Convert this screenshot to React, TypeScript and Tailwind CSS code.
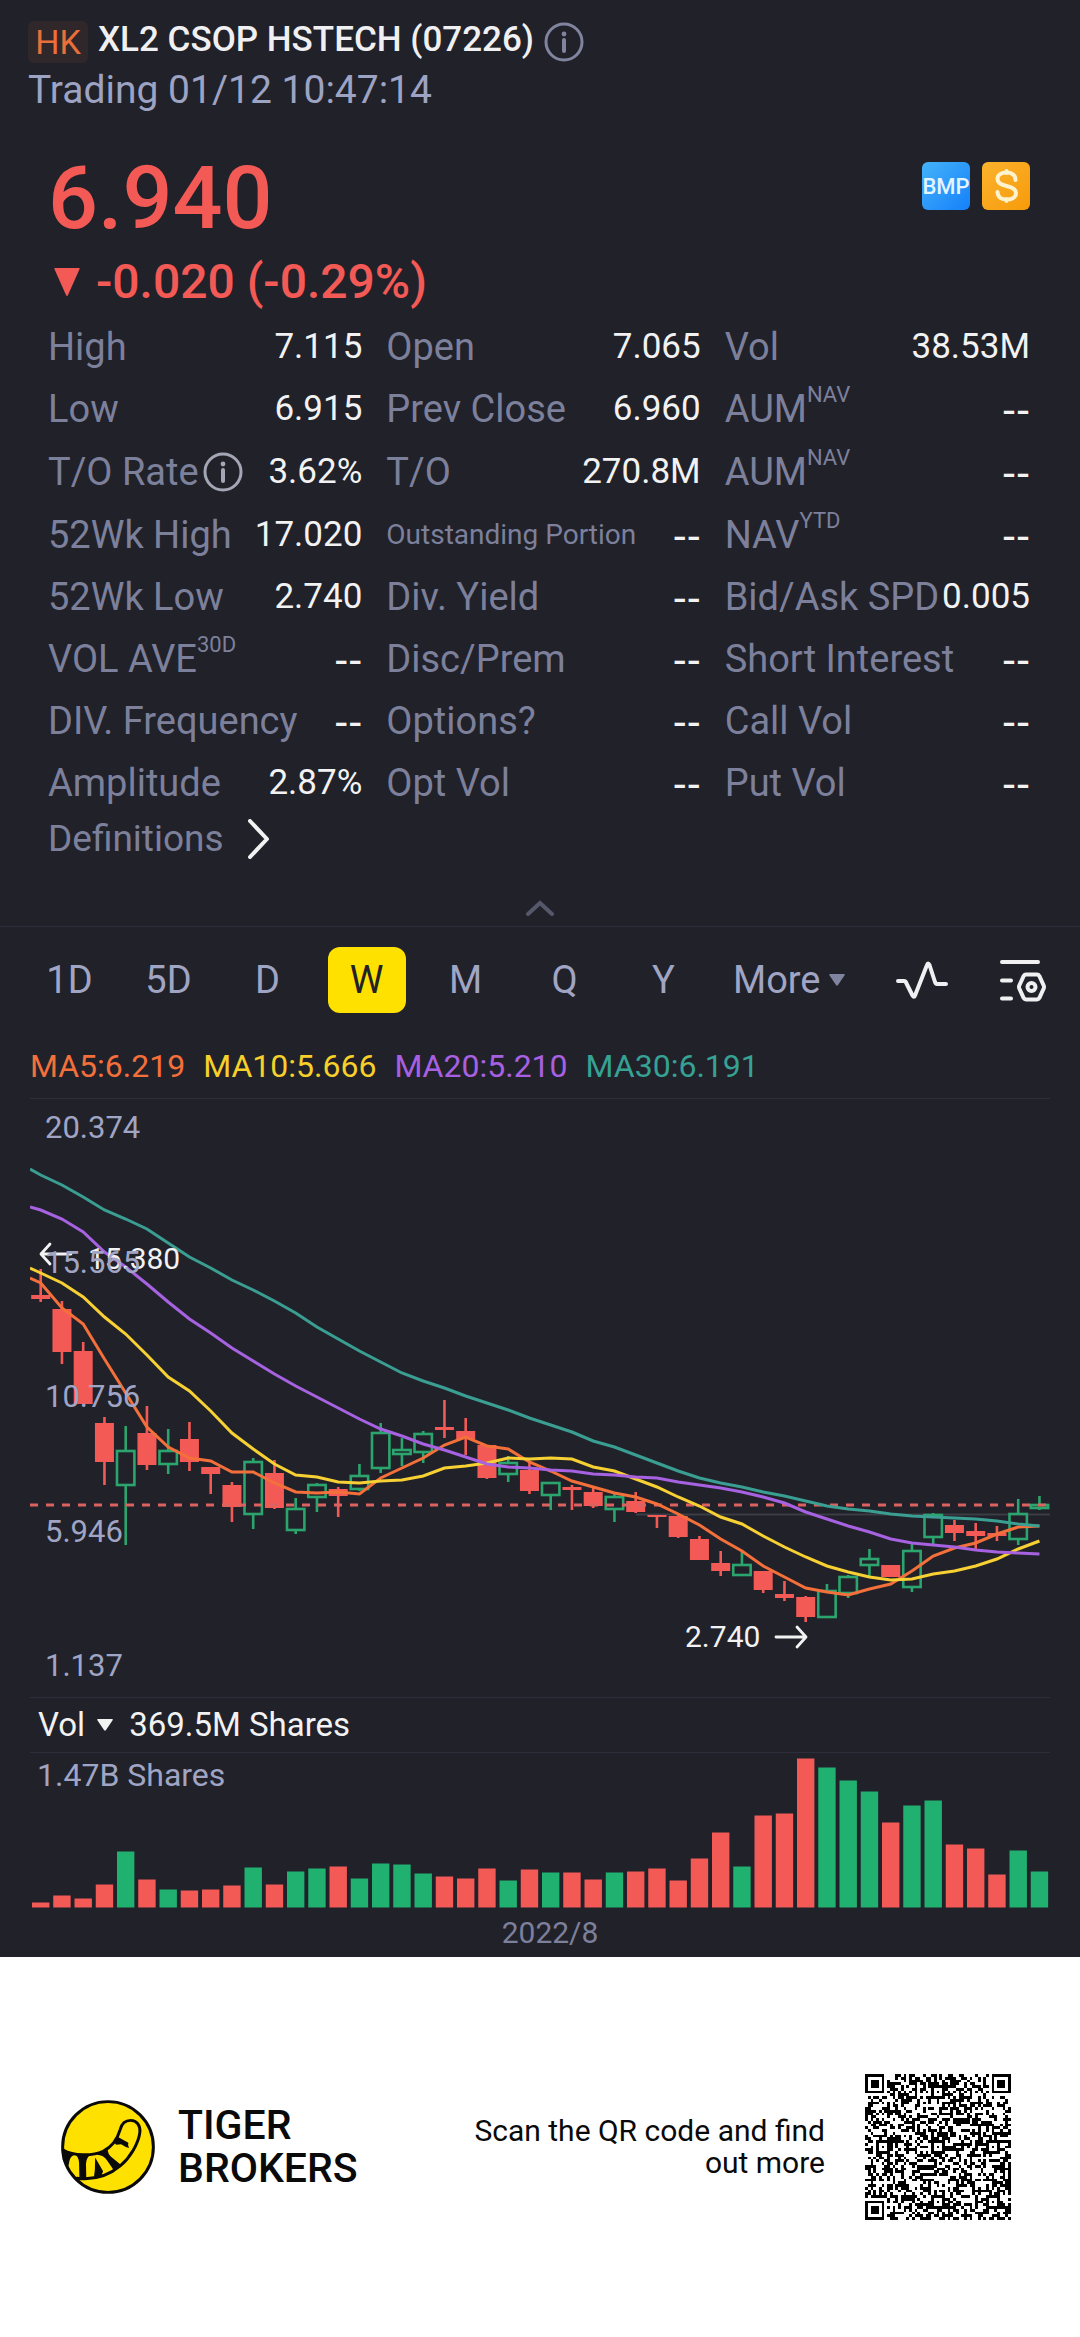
import React from 'react';

type Candle = [up: 0 | 1, high: number, top: number, bottom: number, low: number, volume: number];

const CANDLES: Candle[] = [
  [0, 170, 196, 200, 203, 5], [0, 202, 210, 253, 265, 12], [0, 243, 252, 305, 305, 9], [0, 318, 324, 363, 386, 23],
  [1, 327, 351, 387, 446, 56], [0, 307, 334, 366, 371, 28], [1, 330, 351, 366, 375, 18], [0, 323, 340, 363, 372, 17],
  [0, 368, 368, 375, 395, 18], [0, 383, 386, 408, 423, 22], [1, 359, 362, 416, 430, 40], [0, 361, 374, 409, 410, 23],
  [1, 399, 409, 432, 435, 36], [1, 384, 385, 399, 413, 39], [0, 388, 390, 397, 418, 41], [1, 365, 376, 391, 392, 29],
  [1, 324, 333, 370, 374, 44], [1, 339, 350, 356, 367, 43], [1, 332, 334, 354, 364, 34], [0, 301, 328, 331, 339, 31],
  [0, 319, 332, 340, 356, 29], [0, 346, 346, 379, 380, 39], [1, 357, 363, 376, 383, 27], [0, 363, 371, 392, 395, 38],
  [1, 383, 383, 397, 411, 35], [0, 386, 388, 391, 411, 35], [0, 389, 393, 407, 409, 28], [1, 394, 397, 411, 423, 35],
  [0, 393, 402, 413, 414, 36], [0, 416, 416, 418, 429, 39], [0, 414, 417, 438, 439, 27], [0, 437, 440, 461, 461, 49],
  [0, 452, 464, 472, 477, 75], [1, 453, 465, 477, 477, 41], [0, 472, 472, 491, 494, 92], [0, 482, 495, 499, 502, 94],
  [0, 497, 498, 518, 523, 149], [1, 485, 491, 519, 519, 140], [1, 476, 477, 495, 499, 127], [1, 450, 459, 467, 477, 116],
  [0, 466, 466, 478, 478, 85], [1, 445, 451, 489, 493, 102], [1, 414, 415, 439, 445, 107], [0, 421, 426, 434, 442, 63],
  [0, 424, 432, 437, 450, 59], [0, 427, 434, 437, 442, 33], [1, 400, 414, 441, 446, 57], [1, 397, 405, 410, 411, 36],
];

// The first value is the left edge of the plot, the rest are one per candle
const AVERAGES = [
  {
    label: 'MA5:6.219', color: '#f4703a', text: 'text-[#f4703a]',
    values: [179, 184, 209, 225, 260, 294, 328, 348, 359, 362, 373, 373, 384, 393, 394, 393, 395, 379, 369, 359, 346, 338, 347, 350, 363, 372, 382, 388, 394, 398, 405, 415, 426, 440, 452, 467, 478, 489, 493, 496, 490, 485, 472, 457, 449, 444, 435, 428, 427],
  },
  {
    label: 'MA10:5.666', color: '#f7d034', text: 'text-[#f7d02a]',
    values: [169, 174, 184, 198, 218, 235, 256, 278, 292, 312, 334, 350, 365, 376, 378, 383, 384, 382, 381, 377, 369, 367, 364, 359, 360, 359, 360, 368, 372, 380, 388, 398, 407, 418, 425, 437, 448, 458, 467, 473, 478, 481, 480, 475, 472, 467, 460, 450, 442],
  },
  {
    label: 'MA20:5.210', color: '#a662e0', text: 'text-[#a860e2]',
    values: [108, 111, 120, 133, 153, 168, 185, 203, 220, 234, 249, 262, 275, 287, 298, 309, 320, 330, 337, 345, 351, 358, 365, 368, 369, 371, 372, 375, 376, 378, 379, 383, 386, 389, 393, 398, 404, 413, 420, 427, 433, 440, 444, 446, 448, 451, 453, 454, 455],
  },
  {
    label: 'MA30:6.191', color: '#3a9e92', text: 'text-[#35a294]',
    values: [70, 76, 86, 98, 111, 120, 130, 144, 158, 169, 181, 191, 202, 214, 228, 240, 252, 263, 274, 282, 289, 297, 304, 311, 319, 326, 333, 342, 348, 356, 364, 372, 379, 384, 388, 393, 397, 402, 407, 410, 412, 415, 417, 418, 419, 420, 422, 425, 427],
  },
];

const AXIS = [
  { label: '20.374', y: 39 },
  { label: '15.565', y: 174 },
  { label: '10.756', y: 308 },
  { label: '5.946', y: 443 },
  { label: '1.137', y: 577 },
];

type Stat = { label: string; value: string; sup?: string; info?: boolean; small?: boolean };

const STATS: Stat[] = [
  { label: 'High', value: '7.115' }, { label: 'Open', value: '7.065' }, { label: 'Vol', value: '38.53M' },
  { label: 'Low', value: '6.915' }, { label: 'Prev Close', value: '6.960' }, { label: 'AUM', sup: 'NAV', value: '--' },
  { label: 'T/O Rate', value: '3.62%', info: true }, { label: 'T/O', value: '270.8M' }, { label: 'AUM', sup: 'NAV', value: '--' },
  { label: '52Wk High', value: '17.020' }, { label: 'Outstanding Portion', value: '--', small: true }, { label: 'NAV', sup: 'YTD', value: '--' },
  { label: '52Wk Low', value: '2.740' }, { label: 'Div. Yield', value: '--' }, { label: 'Bid/Ask SPD', value: '0.005' },
  { label: 'VOL AVE', sup: '30D', value: '--' }, { label: 'Disc/Prem', value: '--' }, { label: 'Short Interest', value: '--' },
  { label: 'DIV. Frequency', value: '--' }, { label: 'Options?', value: '--' }, { label: 'Call Vol', value: '--' },
  { label: 'Amplitude', value: '2.87%' }, { label: 'Opt Vol', value: '--' }, { label: 'Put Vol', value: '--' },
];

const PERIODS = ['1D', '5D', 'D', 'W', 'M', 'Q', 'Y'];

const candleX = (i: number) => 10.7 + i * 21.25;

const InfoIcon: React.FC<{ className: string }> = ({ className }) => (
  <svg viewBox="0 0 40 40" fill="none" stroke="currentColor" className={className} aria-hidden="true">
    <circle cx="20" cy="20" r="18" strokeWidth="3" />
    <circle cx="20" cy="12" r="2.4" fill="currentColor" stroke="none" />
    <path d="M20 18v11" strokeWidth="4" strokeLinecap="round" />
  </svg>
);

const Header: React.FC = () => (
  <header className="px-7 pt-5">
    <div className="flex h-11 items-center">
      <span className="flex h-[42px] w-[60px] items-center justify-center rounded-md bg-[#30272b] text-[34px] text-[#ea6f38]">HK</span>
      <h1 className="mb-1 ml-2.5 text-[35px] leading-9 font-medium text-[#f0f0f2]">XL2 CSOP HSTECH (07226)</h1>
      <button aria-label="About this security" className="ml-2.5">
        <InfoIcon className="size-10 text-[#80849f]" />
      </button>
    </div>
    <p className="text-[39px] leading-[52px] text-[#9da3c2]">Trading 01/12 10:47:14</p>
  </header>
);

const Price: React.FC = () => (
  <section className="flex items-start justify-between pt-10 pr-[50px] pl-12 text-[#f35a56]">
    <div>
      <p className="text-[88px] leading-[84px] font-medium">6.940</p>
      <p className="mt-2 flex h-[68px] items-center gap-4 pl-1.5 text-[48px] font-medium">
        <svg viewBox="0 0 26 28" className="h-7 w-6.5" fill="currentColor" aria-hidden="true">
          <path d="M1 0h24q1 0 .6 1L14 27q-1 2-2 0L.4 1Q0 0 1 0z" />
        </svg>
        -0.020 (-0.29%)
      </p>
    </div>
    <div className="mt-1.5 flex gap-3">
      <span className="flex size-12 items-center justify-center rounded-md bg-linear-to-br from-[#45b2fa] to-[#1380fa] text-[22px] font-medium text-[#e4f5ff]">BMP</span>
      <span className="flex size-12 items-center justify-center rounded-md bg-linear-to-br from-[#fbb22b] to-[#f79b04]">
        <svg viewBox="0 0 48 48" className="size-12" fill="none" stroke="#fff3cf" strokeWidth="4" strokeLinecap="round" aria-label="Dollar">
          <path d="M33.500 18c0-5-4-7.500-9-7.500s-9 2.500-9 6.500c0 4.500 4.500 6 9 7s9.500 2.500 9.500 7-4.500 6.500-9.500 6.500-9-2.500-9-7.500M24.500 9v2M24.500 37v2" />
        </svg>
      </span>
    </div>
  </section>
);

const Stats: React.FC = () => (
  <section className="pr-[50px] pl-12">
    <dl className="grid grid-cols-[314fr_314fr_305fr] gap-x-6">
      {STATS.map((s, i) => (
        <div key={i} className={`flex items-center justify-between whitespace-nowrap ${i > 5 && i < 9 ? 'h-16' : 'h-[62px]'}`}>
          <dt className={`flex items-center text-[#7c809b] ${s.small ? 'text-[28px]' : 'text-[38px]'}`}>
            <span>
              {s.label}
              {s.sup && <sup className="-top-5 text-[22px]">{s.sup}</sup>}
            </span>
            {s.info && <InfoIcon className="ml-1 size-10 text-[#a3a6b3]" />}
          </dt>
          <dd className={`text-[#f2f2f3] ${s.value === '--' ? 'font-["Liberation_Sans",sans-serif] text-[42px]' : 'text-[35px]'}`}>{s.value}</dd>
        </div>
      ))}
    </dl>
    <a href="#definitions" className="flex h-[50px] items-center gap-6 text-[37px] text-[#7c809b]">
      Definitions
      <svg viewBox="0 0 22 40" className="h-10 w-5.5 text-[#f2f2f3]" fill="none" stroke="currentColor" strokeWidth="4" strokeLinecap="round" strokeLinejoin="round" aria-hidden="true">
        <path d="M2 2l17 18L2 38" />
      </svg>
    </a>
  </section>
);

const Toolbar: React.FC = () => (
  <nav className="grid grid-cols-[repeat(7,99fr)_333fr] items-center border-t border-[#2d2e3b] pt-5 pr-[34px] pl-5 text-[38px] text-[#a0a5c4]">
    {PERIODS.map((p) => (
      <button key={p} className="flex justify-center">
        <span className={`flex h-[66px] w-[78px] items-center justify-center rounded-xl ${p === 'W' ? 'bg-[#ffe100] text-[#22222a]' : ''}`}>{p}</span>
      </button>
    ))}
    <div className="flex items-center justify-between pl-5">
      <button className="flex items-center gap-2">
        More
        <svg viewBox="0 0 16 12" className="h-3 w-4 text-[#80849f]" fill="currentColor" aria-hidden="true">
          <path d="M1 0h14q1.500 0 .6 1.200L9 11q-1 1.400-2 0L.4 1.200Q-.5 0 1 0z" />
        </svg>
      </button>
      <button aria-label="Indicators">
        <svg viewBox="0 0 52 38" className="h-[38px] w-13 text-[#f0f0f2]" fill="none" stroke="currentColor" strokeWidth="4" strokeLinecap="round" strokeLinejoin="round">
          <path d="M2 20h6q1.500 0 2 1.500l6.500 13q1.500 2.500 2.500 0L31 4q1-3 2.500 0L39 21q.8 2 2 2h9" />
        </svg>
      </button>
      <button aria-label="Chart settings">
        <svg viewBox="0 0 46 44" className="h-11 w-[46px] text-[#f0f0f2]" fill="none" stroke="currentColor" strokeWidth="4" strokeLinecap="round" strokeLinejoin="round">
          <path d="M2 4h36M2 22.500h9M2 40.500h9" />
          <path d="M26 16.500h11q1.500 0 2.300 1.400l4.400 9.600q.6 1.500 0 3l-4.400 9.600q-.8 1.400-2.300 1.400H26q-1.500 0-2.300-1.400l-4.400-9.600q-.6-1.500 0-3l4.400-9.600q.8-1.400 2.300-1.400z" />
          <circle cx="31.500" cy="29" r="4" />
        </svg>
      </button>
    </div>
  </nav>
);

const PriceChart: React.FC = () => (
  <svg viewBox="0 0 1020 598" className="block h-auto w-full" role="img" aria-label="Weekly price chart">
    <path d="M606 415.500h414" stroke="#3c3d45" strokeWidth="2" />
    {CANDLES.map(([up, high, top, bottom, low], i) => {
      const x = candleX(i);
      const color = up ? '#2ba56d' : '#f35a56';
      return (
        <g key={i} stroke={color} strokeWidth="2.600">
          <path d={`M${x} ${high}V${top}M${x} ${bottom}V${low}`} />
          {up ? (
            <rect x={x - 8.7} y={top + 1} width="17.400" height={bottom - top - 2} fill="none" />
          ) : (
            <rect x={x - 9.5} y={top} width="19" height={bottom - top} fill={color} stroke="none" />
          )}
        </g>
      );
    })}
    <path d="M0 406h1017" stroke="#dc6260" strokeWidth="3" strokeDasharray="8 8" />
    {AVERAGES.map((ma) => (
      <polyline
        key={ma.label}
        points={ma.values.map((y, i) => `${i === 0 ? 0 : candleX(i - 1)},${y}`).join(' ')}
        fill="none"
        stroke={ma.color}
        strokeWidth="3"
      />
    ))}
    <g fontSize="30" fill="#f2f2f3">
      <text x="58" y="170">15.380</text>
      <text x="655" y="548">2.740</text>
    </g>
    <g fill="none" stroke="#f2f2f3" strokeWidth="2.800" strokeLinecap="round" strokeLinejoin="round">
      <path d="M41 155H11M20 145L11 155l9 10" />
      <path d="M746 538h30M767 528l9 10-9 10" />
    </g>
    <g fontSize="31" fill="#a0a5c4">
      {AXIS.map((a) => (
        <text key={a.label} x="15" y={a.y}>{a.label}</text>
      ))}
    </g>
  </svg>
);

const VolumeChart: React.FC = () => (
  <svg viewBox="0 0 1020 155" className="block h-auto w-full" role="img" aria-label="Weekly volume">
    {CANDLES.map((c, i) => (
      <rect key={i} x={candleX(i) - 8.7} y={154.5 - c[5]} width="17.400" height={c[5]} fill={c[0] ? '#20b070' : '#f35a56'} />
    ))}
    <text x="7" y="33" fontSize="32" fill="#a0a5c4">1.47B Shares</text>
  </svg>
);

const Chart: React.FC = () => (
  <section className="mx-[30px]">
    <ul className="mt-[33px] flex gap-[18px] border-b border-[#2d2e3b] pb-3 text-[32px] leading-10">
      {AVERAGES.map((ma) => (
        <li key={ma.label} className={ma.text}>{ma.label}</li>
      ))}
    </ul>
    <PriceChart />
    <div className="flex h-14 items-center gap-4 border-y border-[#2d2e3b] px-2 text-[33px] text-[#f2f2f3]">
      <button className="flex items-center gap-3">
        Vol
        <svg viewBox="0 0 16 12" className="h-3 w-4" fill="currentColor" aria-hidden="true">
          <path d="M1 0h14q1.500 0 .6 1.200L9 11q-1 1.400-2 0L.4 1.200Q-.5 0 1 0z" />
        </svg>
      </button>
      369.5M Shares
    </div>
    <VolumeChart />
    <p className="pl-5 text-center text-[30px] leading-[49px] text-[#7c809b]">2022/8</p>
  </section>
);

const TigerLogo: React.FC = () => (
  <svg viewBox="58 53 292 292" className="size-24" aria-hidden="true">
    <circle cx="204" cy="199" r="138" fill="#ffe100" stroke="#0a0a0a" strokeWidth="9" />
    <path
      d="M67 208c32 18 88 20 122 4 32-16 45-42 52-66 5-20 19-28 32-28 19 0 30 16 28 36-4 34-29 76-59 102-38 32-86 44-132 38"
      fill="none"
      stroke="#0a0a0a"
      strokeWidth="9"
      strokeLinecap="round"
    />
    <g fill="#0a0a0a">
      <path d="M66 205l38 18q-14 2-17 17l-5 25-16-28z" />
      <path d="M104 222l44 3q-10 8-11 26l1 44-21-3-1-45q-1-18-12-25z" />
      <path d="M165 231l24 42-5 13-23 6 3-23z" />
      <path d="M168 223l35-20q-1 18 14 29l25 20-21 17-18-27q-14-20-35-19z" />
      <path d="M220 182l13-14 33 18q-3 7 2 16l-10-3-14-8-15 1z" />
    </g>
  </svg>
);

const QR_SIZE = 53;
const QR_ALIGN = [6, 26, 46];

const qrModule = (x: number, y: number) => {
  const last = QR_SIZE - 7;
  for (const [fx, fy] of [[0, 0], [last, 0], [0, last]]) {
    const dx = x - fx;
    const dy = y - fy;
    if (dx >= -1 && dx <= 7 && dy >= -1 && dy <= 7) {
      const ring = Math.max(Math.abs(dx - 3), Math.abs(dy - 3));
      return ring === 3 || ring < 2;
    }
  }
  for (const ax of QR_ALIGN) {
    for (const ay of QR_ALIGN) {
      const ring = Math.max(Math.abs(x - ax), Math.abs(y - ay));
      const onFinder = (ax === 6 && ay !== 26) || (ay === 6 && ax === 46);
      if (!onFinder && ring <= 2) return ring !== 1;
    }
  }
  if (x === 6 || y === 6) return (x + y) % 2 === 0;
  let h = (x * 374761393 + y * 668265263) | 0;
  h = Math.imul(h ^ (h >>> 13), 1274126177);
  return ((h ^ (h >>> 16)) & 1) === 1;
};

const QrCode: React.FC = () => {
  let d = '';
  for (let y = 0; y < QR_SIZE; y++) {
    for (let x = 0; x < QR_SIZE; x++) {
      if (qrModule(x, y)) d += `M${x} ${y}h1v1h-1z`;
    }
  }
  return (
    <svg viewBox="0 0 53 53" className="size-[146px] shrink-0" shapeRendering="crispEdges" role="img" aria-label="QR code">
      <path d={d} />
    </svg>
  );
};

const Footer: React.FC = () => (
  <footer className="flex items-center justify-between bg-white py-[117px] pr-[69px] pl-[60px] text-[#0a0a0a]">
    <div className="flex items-center gap-[22px]">
      <TigerLogo />
      <p className="text-[41px] leading-[43px] font-medium">
        TIGER
        <br />
        BROKERS
      </p>
    </div>
    <div className="flex items-center gap-10">
      <p className="w-[370px] text-right text-[30px] leading-8">Scan the QR code and find out more</p>
      <QrCode />
    </div>
  </footer>
);

export default function App() {
  return (
    <div className="min-h-screen bg-white font-[Roboto,sans-serif]">
      <main className="bg-[#21212a]">
        <Header />
        <Price />
        <Stats />
        <button aria-label="Collapse details" className="flex h-[62px] w-full items-end justify-center pb-2.5 text-[#55586a]">
          <svg viewBox="0 0 28 16" className="h-4 w-7" fill="none" stroke="currentColor" strokeWidth="4" strokeLinecap="round">
            <path d="M2 14L14 3l12 11" />
          </svg>
        </button>
        <Toolbar />
        <Chart />
      </main>
      <Footer />
    </div>
  );
}
